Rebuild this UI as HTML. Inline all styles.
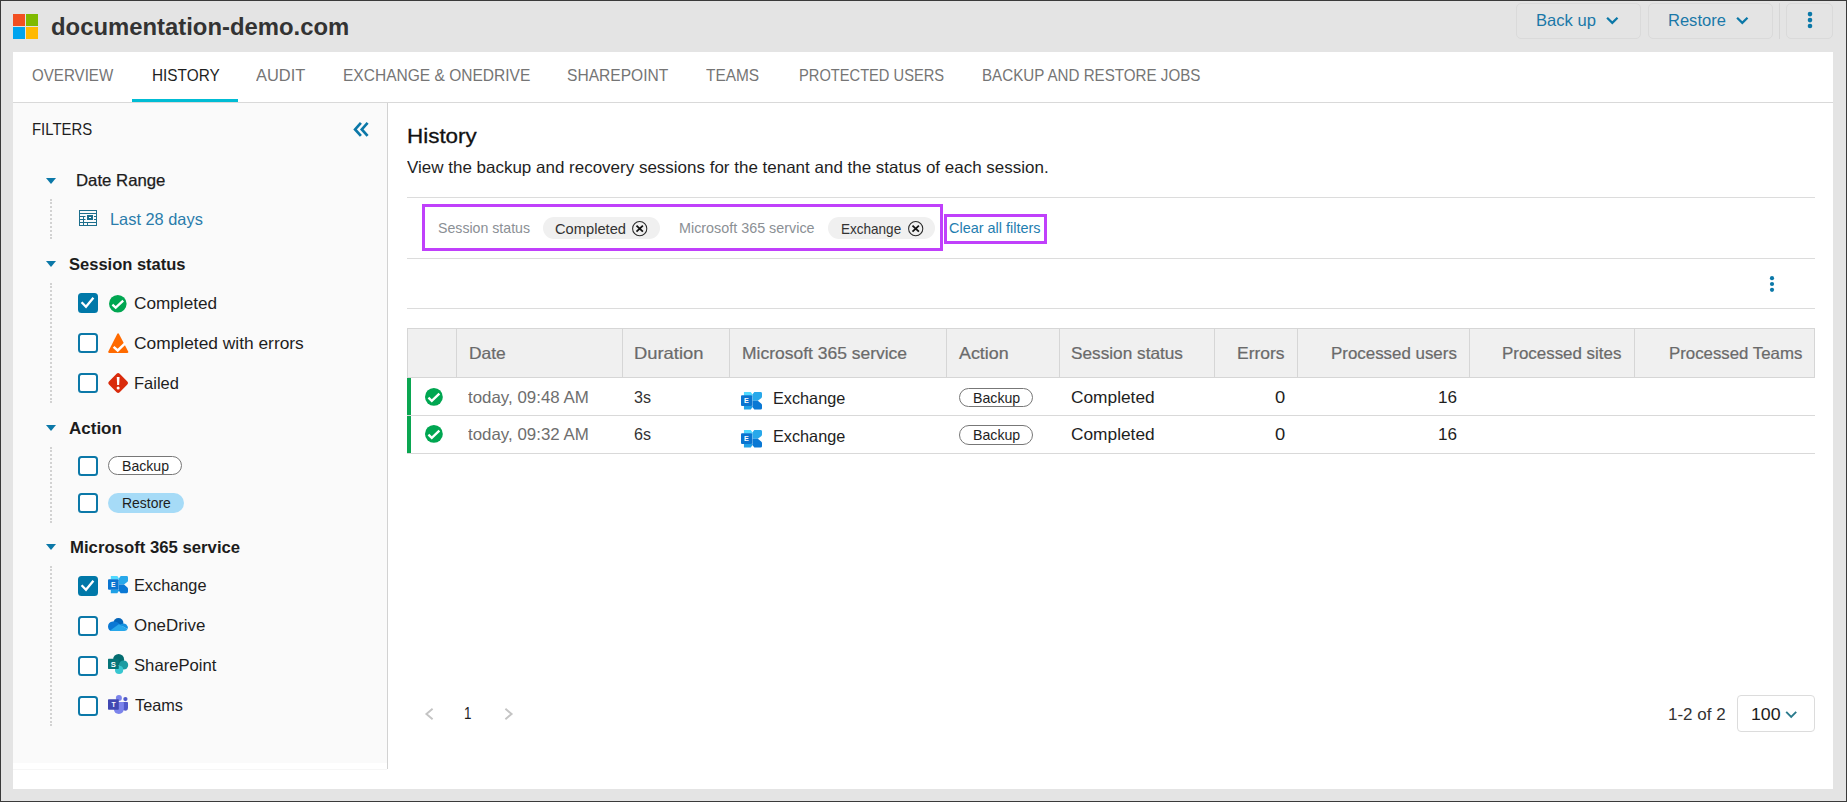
<!DOCTYPE html>
<html lang="en">
<head>
<meta charset="utf-8">
<title>documentation-demo.com - History</title>
<style>
html,body{margin:0;padding:0}
body{width:1847px;height:802px;position:relative;overflow:hidden;background:#e4e4e4;font-family:"Liberation Sans",sans-serif;}
.a{position:absolute;box-sizing:border-box}
.t{position:absolute;white-space:pre;line-height:1}
svg{position:absolute;overflow:visible}
.cb{position:absolute;box-sizing:border-box;width:20px;height:20px;left:78px;border:2px solid #0b78a8;border-radius:3.5px;background:#fff}
.cb.on{background:#0078a8;border-color:#0078a8}
.dot{position:absolute;left:50px;width:0;border-left:2px dotted #d2d2d2}
.hl{position:absolute;left:407px;width:1408px;height:1px;background:#dcdcdc}
.vs{position:absolute;top:329px;width:1px;height:48px;background:#d6d6d6}
.tri{position:absolute;width:0;height:0;border-left:5px solid transparent;border-right:5px solid transparent;border-top:6.5px solid #0b78a8;left:46px}
</style>
</head>
<body>
<!-- window frame -->
<div class="a" style="left:0;top:0;width:1847px;height:802px;border:1px solid #3a3a3a;border-left-width:1.5px"></div>

<!-- header -->
<svg style="left:13px;top:14px" width="25" height="25" viewBox="0 0 25 25"><rect x="0" y="0" width="12" height="12" fill="#f25022"/><rect x="13" y="0" width="12" height="12" fill="#7fba00"/><rect x="0" y="13" width="12" height="12" fill="#00a4ef"/><rect x="13" y="13" width="12" height="12" fill="#ffb900"/></svg>
<div class="a" style="left:1516px;top:3px;width:125px;height:36px;border:1px solid #dadada;border-radius:5px"></div>
<div class="a" style="left:1648px;top:3px;width:125px;height:36px;border:1px solid #dadada;border-radius:5px"></div>
<div class="a" style="left:1779px;top:3px;width:1px;height:36px;background:#d6d6d6"></div>
<div class="a" style="left:1786px;top:3px;width:47px;height:36px;border:1px solid #dadada;border-radius:5px"></div>
<svg style="left:1605.7px;top:16px" width="13" height="9" viewBox="0 0 13 9"><path d="M1.1 1.7 L6.3 6.8 L11.5 1.7" fill="none" stroke="#0b78a8" stroke-width="2.25"/></svg>
<svg style="left:1735.7px;top:16px" width="13" height="9" viewBox="0 0 13 9"><path d="M1.1 1.7 L6.3 6.8 L11.5 1.7" fill="none" stroke="#0b78a8" stroke-width="2.25"/></svg>
<svg style="left:1805px;top:10px" width="10" height="20" viewBox="0 0 10 20"><circle cx="5" cy="4.1" r="2.3" fill="#0b78a8"/><circle cx="5" cy="10.1" r="2.3" fill="#0b78a8"/><circle cx="5" cy="16" r="2.3" fill="#0b78a8"/></svg>

<!-- main white panel -->
<div class="a" style="left:13px;top:52px;width:1820px;height:737px;background:#fff"></div>
<!-- tabs -->
<div class="a" style="left:13px;top:102px;width:1820px;height:1px;background:#d9d9d9"></div>
<div class="a" style="left:132px;top:99px;width:106px;height:3px;background:#00bcd4"></div>

<!-- sidebar -->
<div class="a" style="left:13px;top:103px;width:374px;height:660px;background:#fafafa"></div>
<div class="a" style="left:387px;top:103px;width:1px;height:666px;background:#d2d2d2"></div>
<div class="a" style="left:13px;top:769px;width:374px;height:1px;background:#f6f6f6"></div>
<svg style="left:352px;top:121px" width="18" height="17" viewBox="0 0 18 17"><path d="M8.9 1.9 L3.1 8.4 L8.9 14.9 M15.6 1.9 L9.8 8.4 L15.6 14.9" fill="none" stroke="#0b78a8" stroke-width="2.7"/></svg>

<div class="tri" style="top:178px"></div>
<div class="tri" style="top:261px"></div>
<div class="tri" style="top:425px"></div>
<div class="tri" style="top:544px"></div>
<div class="dot" style="top:199px;height:40px"></div>
<div class="dot" style="top:283px;height:120px"></div>
<div class="dot" style="top:447px;height:76px"></div>
<div class="dot" style="top:566px;height:160px"></div>

<!-- calendar icon -->
<svg style="left:79px;top:210px" width="18" height="16" viewBox="0 0 18 16"><g fill="none" stroke="#1c6e8c" stroke-width="1"><rect x="0.5" y="0.5" width="17" height="15"/><path d="M0.5 3.5H17.5M0.5 6.5H6.5M15 6.5H17.5M0.5 9.5H6.5M15 9.5H17.5M0.5 12.5H17.5M4.5 6.5V15.5M8.5 12.5V15.5"/></g><rect x="8" y="5" width="6" height="5" fill="#1c6e8c"/><rect x="10" y="7" width="2" height="1" fill="#fff"/></svg>

<!-- session status -->
<div class="cb on" style="top:293px"></div>
<svg style="left:78px;top:293px" width="20" height="20" viewBox="0 0 20 20"><path d="M3.6 9.2 L8 13.8 L15.4 4.8" fill="none" stroke="#fff" stroke-width="2.3"/></svg>
<div class="cb" style="top:333px"></div>
<div class="cb" style="top:373px"></div>
<svg style="left:109px;top:294.6px" width="17.6" height="17.6" viewBox="0 0 17.6 17.6"><circle cx="8.8" cy="8.8" r="8.8" fill="#00a651"/><path d="M3.4 9.6 L6.7 12.7 L14.2 5.6" fill="none" stroke="#fff" stroke-width="2.3"/></svg>
<svg style="left:107.5px;top:333px" width="20.5" height="20" viewBox="0 0 20.5 20"><path d="M9.2 0.9 Q10.1 -0.6 11 0.9 L20.2 18.6 Q20.8 20 19.3 20 H1.2 Q-0.3 20 0.3 18.6 Z" fill="#ff6a00"/><path d="M5.6 13.9 L9.7 17.5 L17.6 9.8" fill="none" stroke="#fff" stroke-width="2.5"/></svg>
<svg style="left:107.7px;top:373px" width="20.3" height="20" viewBox="0 0 20 20"><rect x="2.4" y="2.4" width="15.2" height="15.2" rx="2.2" fill="#d92b0c" transform="rotate(45 10 10)"/><path d="M8.6 3.9 H11.4 L11 12.1 H9 Z" fill="#fff"/><circle cx="10" cy="15" r="1.5" fill="#fff"/></svg>

<!-- action -->
<div class="cb" style="top:456px"></div>
<div class="cb" style="top:493px"></div>
<div class="a" style="left:108px;top:456px;width:74px;height:19px;border:1px solid #777;border-radius:10px;background:#fff"></div>
<div class="a" style="left:108px;top:493px;width:76px;height:20px;border-radius:10px;background:#a6dbf7"></div>

<!-- ms365 -->
<div class="cb on" style="top:576px"></div>
<svg style="left:78px;top:576px" width="20" height="20" viewBox="0 0 20 20"><path d="M3.6 9.2 L8 13.8 L15.4 4.8" fill="none" stroke="#fff" stroke-width="2.3"/></svg>
<div class="cb" style="top:616px"></div>
<div class="cb" style="top:656px"></div>
<div class="cb" style="top:696px"></div>

<!-- exchange icon -->
<svg style="left:108px;top:576px" width="20" height="17.2" viewBox="0 0 20 17.2"><g>
<path d="M2.8 0 H9.3 L11 2.5 V3.6 H2.8 Z" fill="#50d9ff"/>
<path d="M2.8 13.6 H11 V14.7 L9.3 17.2 H2.8 Z" fill="#1ea0e6"/>
<path d="M12.7 0 H18.6 A1.4 1.4 0 0 1 20 1.4 V4.4 A2 2 0 0 1 19.2 6 L16 8.6 H10.9 V3.2 Q10.9 2.4 11.4 1.7 Z" fill="#28a8ea"/>
<path d="M10.9 8.6 H16 L19.2 11.2 A2 2 0 0 1 20 12.8 V15.8 A1.4 1.4 0 0 1 18.6 17.2 H12.7 L11.4 15.5 Q10.9 14.8 10.9 14 Z" fill="#0a78d4"/>
<rect x="0" y="3.2" width="10.7" height="10.6" rx="1" fill="#0a74d0"/>
<text x="5.2" y="11.1" font-family="Liberation Sans, sans-serif" font-size="6.8" font-weight="700" fill="#fff" text-anchor="middle">E</text>
</g></svg>
<!-- onedrive icon -->
<svg style="left:108px;top:618px" width="20" height="13" viewBox="0 0 20 13">
<circle cx="10.4" cy="5" r="5" fill="#0364b8"/>
<path d="M4.8 3.6 Q7 3 9 4 L13 7 L4 13 Q0 12.6 0 8.4 Q0.2 4.4 4.8 3.6Z" fill="#0a78d4"/>
<path d="M13 6 Q16 4.6 18.4 6.6 Q20.4 8.6 19.6 11 L12 7Z" fill="#1490df"/>
<path d="M2.2 12.4 L10.4 6.5 Q11 6.2 11.7 6.6 L19.6 10.9 Q18.8 13 16.4 13 H4.4 Q3 13 2.2 12.4Z" fill="#28a8ea"/>
</svg>
<!-- sharepoint icon -->
<svg style="left:108px;top:654px" width="20" height="20" viewBox="0 0 20 20">
<circle cx="10.6" cy="5.5" r="5.5" fill="#036c70"/>
<circle cx="15.6" cy="11" r="4.6" fill="#1a9ba1"/>
<circle cx="11.1" cy="15.9" r="4.1" fill="#37c6d0"/>
<rect x="0" y="4.8" width="10.8" height="10.1" rx="0.6" fill="#057478"/>
<text x="5.3" y="12.9" font-family="Liberation Sans, sans-serif" font-size="7.7" font-weight="700" fill="#fff" text-anchor="middle">S</text>
</svg>
<!-- teams icon -->
<svg style="left:108px;top:695px" width="20" height="19" viewBox="0 0 20 19">
<circle cx="17.4" cy="4.1" r="2.15" fill="#5059c9"/>
<path d="M14 7.1 H19.2 Q20 7.1 20 7.9 V12.4 Q20 15.7 17.2 15.7 Q14.6 15.7 14 13Z" fill="#5059c9"/>
<circle cx="10.9" cy="3" r="3" fill="#7b83eb"/>
<path d="M5.8 7.1 H15.1 Q15.9 7.1 15.9 7.9 V13.8 Q15.6 18.8 10.8 19 Q6.2 18.8 5.8 14Z" fill="#7b83eb"/>
<rect x="0" y="4.3" width="10.8" height="10.5" rx="0.7" fill="#4048b2"/>
<text x="5.5" y="11.9" font-family="Liberation Sans, sans-serif" font-size="6.9" font-weight="700" fill="#fff" text-anchor="middle">T</text>
</svg>

<!-- main lines -->
<div class="hl" style="top:197px"></div>
<div class="hl" style="top:258px"></div>
<div class="hl" style="top:308px"></div>

<!-- filter chips -->
<div class="a" style="left:543px;top:217px;width:117px;height:22px;border-radius:11px;background:#f0f0f0"></div>
<div class="a" style="left:828px;top:217px;width:107px;height:22px;border-radius:11px;background:#f0f0f0"></div>
<svg style="left:631.9px;top:220.9px" width="15.4" height="15.4" viewBox="0 0 15.4 15.4"><circle cx="7.7" cy="7.7" r="7.1" fill="none" stroke="#2a2a2a" stroke-width="1.05"/><path d="M4.5 4.7 L10.9 10.7 M10.9 4.7 L4.5 10.7" stroke="#111" stroke-width="1.8" fill="none"/></svg>
<svg style="left:908px;top:220.9px" width="15.4" height="15.4" viewBox="0 0 15.4 15.4"><circle cx="7.7" cy="7.7" r="7.1" fill="none" stroke="#2a2a2a" stroke-width="1.05"/><path d="M4.5 4.7 L10.9 10.7 M10.9 4.7 L4.5 10.7" stroke="#111" stroke-width="1.8" fill="none"/></svg>
<!-- purple highlight boxes -->
<div class="a" style="left:422px;top:204px;width:521px;height:47px;border:3px solid #c040fb"></div>
<div class="a" style="left:944px;top:214px;width:103px;height:29.5px;border:3px solid #c040fb"></div>

<!-- toolbar dots -->
<svg style="left:1767px;top:274px" width="10" height="20" viewBox="0 0 10 20"><circle cx="5" cy="4.2" r="2.1" fill="#0b78a8"/><circle cx="5" cy="10" r="2.1" fill="#0b78a8"/><circle cx="5" cy="15.8" r="2.1" fill="#0b78a8"/></svg>

<!-- table -->
<div class="a" style="left:407px;top:328px;width:1408px;height:50px;background:#f0f0f0;border:1px solid #d6d6d6"></div>
<div class="vs" style="left:456px"></div>
<div class="vs" style="left:622px"></div>
<div class="vs" style="left:729px"></div>
<div class="vs" style="left:946px"></div>
<div class="vs" style="left:1059px"></div>
<div class="vs" style="left:1214px"></div>
<div class="vs" style="left:1297px"></div>
<div class="vs" style="left:1469px"></div>
<div class="vs" style="left:1634px"></div>
<div class="hl" style="top:415px;background:#d9d9d9"></div>
<div class="hl" style="top:453px;background:#d9d9d9"></div>
<div class="a" style="left:407px;top:378px;width:4px;height:37px;background:#0aa651"></div>
<div class="a" style="left:407px;top:416px;width:4px;height:37px;background:#0aa651"></div>
<svg style="left:424.5px;top:388.4px" width="17.8" height="17.8" viewBox="0 0 17.6 17.6"><circle cx="8.8" cy="8.8" r="8.8" fill="#00a651"/><path d="M3.4 9.6 L6.7 12.7 L14.2 5.6" fill="none" stroke="#fff" stroke-width="2.3"/></svg>
<svg style="left:424.5px;top:425.3px" width="17.8" height="17.8" viewBox="0 0 17.6 17.6"><circle cx="8.8" cy="8.8" r="8.8" fill="#00a651"/><path d="M3.4 9.6 L6.7 12.7 L14.2 5.6" fill="none" stroke="#fff" stroke-width="2.3"/></svg>
<svg style="left:741.4px;top:391.7px" width="21" height="17.6" viewBox="0 0 20 17.2" preserveAspectRatio="none">
<g>
<path d="M2.8 0 H9.3 L11 2.5 V3.6 H2.8 Z" fill="#50d9ff"/>
<path d="M2.8 13.6 H11 V14.7 L9.3 17.2 H2.8 Z" fill="#1ea0e6"/>
<path d="M12.7 0 H18.6 A1.4 1.4 0 0 1 20 1.4 V4.4 A2 2 0 0 1 19.2 6 L16 8.6 H10.9 V3.2 Q10.9 2.4 11.4 1.7 Z" fill="#28a8ea"/>
<path d="M10.9 8.6 H16 L19.2 11.2 A2 2 0 0 1 20 12.8 V15.8 A1.4 1.4 0 0 1 18.6 17.2 H12.7 L11.4 15.5 Q10.9 14.8 10.9 14 Z" fill="#0a78d4"/>
<rect x="0" y="3.2" width="10.7" height="10.6" rx="1" fill="#0a74d0"/>
<text x="5.2" y="11.1" font-family="Liberation Sans, sans-serif" font-size="6.8" font-weight="700" fill="#fff" text-anchor="middle">E</text>
</g>
</svg>
<svg style="left:741.4px;top:429.6px" width="21" height="17.6" viewBox="0 0 20 17.2" preserveAspectRatio="none"><g>
<path d="M2.8 0 H9.3 L11 2.5 V3.6 H2.8 Z" fill="#50d9ff"/>
<path d="M2.8 13.6 H11 V14.7 L9.3 17.2 H2.8 Z" fill="#1ea0e6"/>
<path d="M12.7 0 H18.6 A1.4 1.4 0 0 1 20 1.4 V4.4 A2 2 0 0 1 19.2 6 L16 8.6 H10.9 V3.2 Q10.9 2.4 11.4 1.7 Z" fill="#28a8ea"/>
<path d="M10.9 8.6 H16 L19.2 11.2 A2 2 0 0 1 20 12.8 V15.8 A1.4 1.4 0 0 1 18.6 17.2 H12.7 L11.4 15.5 Q10.9 14.8 10.9 14 Z" fill="#0a78d4"/>
<rect x="0" y="3.2" width="10.7" height="10.6" rx="1" fill="#0a74d0"/>
<text x="5.2" y="11.1" font-family="Liberation Sans, sans-serif" font-size="6.8" font-weight="700" fill="#fff" text-anchor="middle">E</text>
</g></svg>
<div class="a" style="left:959px;top:388px;width:74px;height:19px;border:1px solid #777;border-radius:10px;background:#fff"></div>
<div class="a" style="left:959px;top:425px;width:74px;height:20px;border:1px solid #777;border-radius:10px;background:#fff"></div>

<!-- pagination -->
<svg style="left:424px;top:707px" width="11" height="14" viewBox="0 0 11 14"><path d="M8.6 1.8 L2.4 7 L8.6 12.2" fill="none" stroke="#c4c4c4" stroke-width="1.9"/></svg>
<svg style="left:503px;top:707px" width="11" height="14" viewBox="0 0 11 14"><path d="M2.4 1.8 L8.6 7 L2.4 12.2" fill="none" stroke="#c4c4c4" stroke-width="1.9"/></svg>
<div class="a" style="left:1737px;top:695px;width:78px;height:37px;border:1px solid #dcdcdc;border-radius:4px;background:#fff"></div>
<svg style="left:1785px;top:710px" width="13" height="9" viewBox="0 0 13 9"><path d="M1.2 1.8 L6.2 6.8 L11.2 1.8" fill="none" stroke="#2a7a8c" stroke-width="1.9"/></svg>

<!-- text -->
<span class="t" style="left:51.11px;top:15px;font-size:23.75px;color:#333;font-weight:700;transform:scaleX(1.0048);transform-origin:0 0;">documentation-demo.com</span>
<span class="t" style="left:1535.98px;top:12px;font-size:16.5px;color:#1a78a8;transform:scaleX(1.0045);transform-origin:0 0;">Back up</span>
<span class="t" style="left:1668.09px;top:12px;font-size:16.5px;color:#1a78a8;transform:scaleX(1.0012);transform-origin:0 0;">Restore</span>
<span class="t" style="left:31.75px;top:67px;font-size:17px;color:#757575;transform:scaleX(0.8891);transform-origin:0 0;">OVERVIEW</span>
<span class="t" style="left:151.74px;top:67px;font-size:17px;color:#1f1f1f;transform:scaleX(0.9034);transform-origin:0 0;">HISTORY</span>
<span class="t" style="left:256.41px;top:67px;font-size:17px;color:#757575;transform:scaleX(0.9669);transform-origin:0 0;">AUDIT</span>
<span class="t" style="left:343.23px;top:67px;font-size:17px;color:#757575;transform:scaleX(0.9137);transform-origin:0 0;">EXCHANGE &amp; ONEDRIVE</span>
<span class="t" style="left:566.97px;top:67px;font-size:17px;color:#757575;transform:scaleX(0.9159);transform-origin:0 0;">SHAREPOINT</span>
<span class="t" style="left:706.01px;top:67px;font-size:17px;color:#757575;transform:scaleX(0.9079);transform-origin:0 0;">TEAMS</span>
<span class="t" style="left:799.04px;top:67px;font-size:17px;color:#757575;transform:scaleX(0.8629);transform-origin:0 0;">PROTECTED USERS</span>
<span class="t" style="left:981.84px;top:67px;font-size:17px;color:#757575;transform:scaleX(0.8915);transform-origin:0 0;">BACKUP AND RESTORE JOBS</span>
<span class="t" style="left:31.94px;top:121px;font-size:17px;color:#1e1e1e;transform:scaleX(0.877);transform-origin:0 0;">FILTERS</span>
<span class="t" style="left:76.44px;top:172px;font-size:16.5px;color:#1c1c1c;-webkit-text-stroke:0.25px #1c1c1c;transform:scaleX(1.0157);transform-origin:0 0;">Date Range</span>
<span class="t" style="left:110.29px;top:211px;font-size:16.5px;color:#2a7cab;transform:scaleX(0.9923);transform-origin:0 0;">Last 28 days</span>
<span class="t" style="left:68.78px;top:256px;font-size:16.5px;color:#1c1c1c;font-weight:700;transform:scaleX(1.0006);transform-origin:0 0;">Session status</span>
<span class="t" style="left:134.27px;top:295px;font-size:16.5px;color:#1e1e1e;transform:scaleX(1.041);transform-origin:0 0;">Completed</span>
<span class="t" style="left:134.25px;top:335px;font-size:16.5px;color:#1e1e1e;transform:scaleX(1.0519);transform-origin:0 0;">Completed with errors</span>
<span class="t" style="left:133.69px;top:375px;font-size:16.5px;color:#1e1e1e;transform:scaleX(1.0001);transform-origin:0 0;">Failed</span>
<span class="t" style="left:69.27px;top:420px;font-size:16.5px;color:#1c1c1c;font-weight:700;transform:scaleX(1.03);transform-origin:0 0;">Action</span>
<span class="t" style="left:121.66px;top:459px;font-size:14.5px;color:#1e1e1e;transform:scaleX(0.9716);transform-origin:0 0;">Backup</span>
<span class="t" style="left:121.66px;top:496px;font-size:14.5px;color:#1e1e1e;transform:scaleX(0.9616);transform-origin:0 0;">Restore</span>
<span class="t" style="left:69.77px;top:539px;font-size:16.5px;color:#1c1c1c;font-weight:700;transform:scaleX(1.0139);transform-origin:0 0;">Microsoft 365 service</span>
<span class="t" style="left:133.71px;top:577px;font-size:16.5px;color:#1e1e1e;transform:scaleX(0.9872);transform-origin:0 0;">Exchange</span>
<span class="t" style="left:134.31px;top:617px;font-size:16.5px;color:#1e1e1e;transform:scaleX(1.0238);transform-origin:0 0;">OneDrive</span>
<span class="t" style="left:134.23px;top:657px;font-size:16.5px;color:#1e1e1e;transform:scaleX(1.0097);transform-origin:0 0;">SharePoint</span>
<span class="t" style="left:134.68px;top:697px;font-size:16.5px;color:#1e1e1e;transform:scaleX(0.9875);transform-origin:0 0;">Teams</span>
<span class="t" style="left:406.57px;top:125px;font-size:21px;color:#111;-webkit-text-stroke:0.3px #111;transform:scaleX(1.0678);transform-origin:0 0;">History</span>
<span class="t" style="left:406.95px;top:159px;font-size:16.5px;color:#1e1e1e;transform:scaleX(1.0292);transform-origin:0 0;">View the backup and recovery sessions for the tenant and the status of each session.</span>
<span class="t" style="left:437.74px;top:221px;font-size:14.5px;color:#8b9095;transform:scaleX(0.9758);transform-origin:0 0;">Session status</span>
<span class="t" style="left:555.24px;top:222px;font-size:14.5px;color:#333;transform:scaleX(1.0119);transform-origin:0 0;">Completed</span>
<span class="t" style="left:678.96px;top:221px;font-size:14.5px;color:#8b9095;transform:scaleX(0.9896);transform-origin:0 0;">Microsoft 365 service</span>
<span class="t" style="left:840.97px;top:222px;font-size:14.5px;color:#333;transform:scaleX(0.9327);transform-origin:0 0;">Exchange</span>
<span class="t" style="left:948.54px;top:221px;font-size:14.5px;color:#1f7eb0;transform:scaleX(0.9964);transform-origin:0 0;">Clear all filters</span>
<span class="t" style="left:468.62px;top:345px;font-size:16.5px;color:#6a6a6a;-webkit-text-stroke:0.22px #6a6a6a;transform:scaleX(1.0538);transform-origin:0 0;">Date</span>
<span class="t" style="left:634.48px;top:345px;font-size:16.5px;color:#6a6a6a;-webkit-text-stroke:0.22px #6a6a6a;transform:scaleX(1.1129);transform-origin:0 0;">Duration</span>
<span class="t" style="left:742.22px;top:345px;font-size:16.5px;color:#6a6a6a;-webkit-text-stroke:0.22px #6a6a6a;transform:scaleX(1.0589);transform-origin:0 0;">Microsoft 365 service</span>
<span class="t" style="left:959.05px;top:345px;font-size:16.5px;color:#6a6a6a;-webkit-text-stroke:0.22px #6a6a6a;transform:scaleX(1.0817);transform-origin:0 0;">Action</span>
<span class="t" style="left:1071.35px;top:345px;font-size:16.5px;color:#6a6a6a;-webkit-text-stroke:0.22px #6a6a6a;transform:scaleX(1.0433);transform-origin:0 0;">Session status</span>
<span class="t" style="left:1237.22px;top:345px;font-size:16.5px;color:#6a6a6a;-webkit-text-stroke:0.22px #6a6a6a;transform:scaleX(1.06);transform-origin:0 0;">Errors</span>
<span class="t" style="left:1330.82px;top:345px;font-size:16.5px;color:#6a6a6a;-webkit-text-stroke:0.22px #6a6a6a;transform:scaleX(1.024);transform-origin:0 0;">Processed users</span>
<span class="t" style="left:1501.82px;top:345px;font-size:16.5px;color:#6a6a6a;-webkit-text-stroke:0.22px #6a6a6a;transform:scaleX(1.0252);transform-origin:0 0;">Processed sites</span>
<span class="t" style="left:1668.62px;top:345px;font-size:16.5px;color:#6a6a6a;-webkit-text-stroke:0.22px #6a6a6a;transform:scaleX(1.0188);transform-origin:0 0;">Processed Teams</span>
<span class="t" style="left:468.47px;top:389px;font-size:16.5px;color:#6e6e6e;transform:scaleX(1.0231);transform-origin:0 0;">today, 09:48 AM</span>
<span class="t" style="left:634.33px;top:389px;font-size:16.5px;color:#333;transform:scaleX(0.9742);transform-origin:0 0;">3s</span>
<span class="t" style="left:772.82px;top:390px;font-size:16.5px;color:#1e1e1e;transform:scaleX(0.9844);transform-origin:0 0;">Exchange</span>
<span class="t" style="left:972.66px;top:391px;font-size:14.5px;color:#1e1e1e;transform:scaleX(0.9758);transform-origin:0 0;">Backup</span>
<span class="t" style="left:1071.25px;top:389px;font-size:16.5px;color:#1e1e1e;transform:scaleX(1.0487);transform-origin:0 0;">Completed</span>
<span class="t" style="left:1274.67px;top:389px;font-size:16.5px;color:#1e1e1e;transform:scaleX(1.1125);transform-origin:0 0;">0</span>
<span class="t" style="left:1437.94px;top:389px;font-size:16.5px;color:#1e1e1e;transform:scaleX(1.0363);transform-origin:0 0;">16</span>
<span class="t" style="left:468.47px;top:426px;font-size:16.5px;color:#6e6e6e;transform:scaleX(1.0231);transform-origin:0 0;">today, 09:32 AM</span>
<span class="t" style="left:634.31px;top:426px;font-size:16.5px;color:#333;transform:scaleX(0.9763);transform-origin:0 0;">6s</span>
<span class="t" style="left:772.82px;top:428px;font-size:16.5px;color:#1e1e1e;transform:scaleX(0.9844);transform-origin:0 0;">Exchange</span>
<span class="t" style="left:972.66px;top:428px;font-size:14.5px;color:#1e1e1e;transform:scaleX(0.9758);transform-origin:0 0;">Backup</span>
<span class="t" style="left:1071.25px;top:426px;font-size:16.5px;color:#1e1e1e;transform:scaleX(1.0487);transform-origin:0 0;">Completed</span>
<span class="t" style="left:1274.67px;top:426px;font-size:16.5px;color:#1e1e1e;transform:scaleX(1.1125);transform-origin:0 0;">0</span>
<span class="t" style="left:1437.94px;top:426px;font-size:16.5px;color:#1e1e1e;transform:scaleX(1.0363);transform-origin:0 0;">16</span>
<span class="t" style="left:464.15px;top:705px;font-size:16.5px;color:#1c1c1c;transform:scaleX(0.8131);transform-origin:0 0;">1</span>
<span class="t" style="left:1667.55px;top:706px;font-size:16.5px;color:#333;transform:scaleX(1.0291);transform-origin:0 0;">1-2 of 2</span>
<span class="t" style="left:1750.81px;top:706px;font-size:16.5px;color:#1c1c1c;transform:scaleX(1.0758);transform-origin:0 0;">100</span>
</body>
</html>
